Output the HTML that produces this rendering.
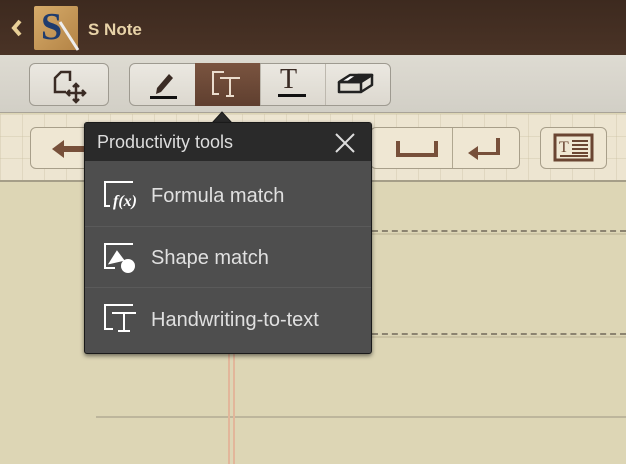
<!DOCTYPE html>
<html><head><style>
*{margin:0;padding:0;box-sizing:border-box}
body{width:626px;height:464px;overflow:hidden;position:relative;font-family:"Liberation Sans",sans-serif;background:#ddd6b5}
.a{position:absolute}
.top{left:0;top:0;width:626px;height:55px;background:linear-gradient(#3d2a1f,#4a3326);}
.tb{left:0;top:55px;width:626px;height:58px;background:linear-gradient(#dedbd2,#d2cfc6);border-bottom:1px solid #a9a398}
.kb{left:0;top:114px;width:626px;height:68px;background-color:#ede5d1;background-image:linear-gradient(90deg,rgba(200,190,160,.35) 1px,transparent 1px),linear-gradient(rgba(200,190,160,.35) 1px,transparent 1px);background-size:22px 22px;border-bottom:2px solid #a59e88}
.btn{border:1px solid #9e9a90;border-radius:6px;background:linear-gradient(#ebe8e1,#dcd8cf)}
.kbtn{border:1px solid #a89f8a;border-radius:6px;background:#efe7d3}
.pop{left:84px;top:122px;width:288px;height:232px;background:#4e4e4e;border:1px solid #1a1a1a;border-radius:3px;box-shadow:0 2px 4px rgba(0,0,0,.5)}
.hd{left:0;top:0;width:286px;height:38px;background:#2a2a2a;color:#ddd;font-size:18px;padding:9px 0 0 12px}
.it{left:0;width:286px;color:#e0e0e0;font-size:20px;padding-left:66px;border-top:1px solid #5a5a5a}
.dash{height:0;border-top:2px dashed #8c8470}
</style></head><body>
<div class="a top"></div>
<svg class="a" style="left:10px;top:18px" width="14" height="20"><path d="M10 3L4 10l6 7" fill="none" stroke="#e8cf97" stroke-width="4"/></svg>
<div class="a" style="left:34px;top:6px;width:44px;height:44px;background:linear-gradient(135deg,#d6ab6a,#b48446);border-radius:2px"></div>
<div class="a" style="left:41px;top:5px;font-family:'Liberation Serif',serif;font-size:38px;font-weight:bold;color:#1f3c6e">S</div>
<svg class="a" style="left:58px;top:20px" width="24" height="32"><line x1="2" y1="2" x2="20" y2="30" stroke="#eee" stroke-width="3"/></svg>
<div class="a" style="left:88px;top:20px;color:#e8d3a8;font-size:17px;font-weight:bold">S Note</div>

<div class="a tb"></div>
<div class="a btn" style="left:29px;top:63px;width:80px;height:43px"></div>
<svg class="a" style="left:52px;top:70px" width="36" height="34" fill="none" stroke="#3a2b24" stroke-width="2.5"><path d="M14 22H3V8l6-6h9v9"/><path d="M24 14v18M15 23h18"/><path d="M21 17l3-3 3 3M21 29l3 3 3-3M18 20l-3 3 3 3M30 20l3 3-3 3"/></svg>
<div class="a btn" style="left:129px;top:63px;width:262px;height:43px"></div>
<div class="a" style="left:195px;top:63px;width:65px;height:43px;background:linear-gradient(#7a5440,#5f3f2f)"></div>
<div class="a" style="left:260px;top:64px;width:1px;height:41px;background:#bdb8ae"></div>
<div class="a" style="left:325px;top:64px;width:1px;height:41px;background:#bdb8ae"></div>
<svg class="a" style="left:145px;top:68px" width="40" height="34"><path d="M12 20l12-14 4 4-12 14-5 2z" fill="#3a2b24"/><rect x="5" y="28" width="27" height="3" fill="#111"/></svg>
<svg class="a" style="left:210px;top:70px" width="36" height="28" fill="none" stroke="#eadccd" stroke-width="2"><path d="M14 2H3v22h6"/><path d="M10 8h20M20 8v18M16 26h8"/></svg>
<div class="a" style="left:280px;top:64px;font-family:'Liberation Serif',serif;font-size:28px;color:#3a2b24">T</div>
<div class="a" style="left:278px;top:94px;width:28px;height:3px;background:#111"></div>
<svg class="a" style="left:336px;top:70px" width="40" height="30" fill="none" stroke="#222" stroke-width="2.5" stroke-linejoin="round"><path d="M3 12L14 5h22l-11 7z" fill="#fff"/><path d="M22 5h14l-11 7H12z" fill="#222"/><path d="M3 12v10h22V12M25 22l11-7V5"/><path d="M3 12h22"/></svg>

<div class="a kb"></div>
<div class="a kbtn" style="left:30px;top:127px;width:70px;height:42px"></div>
<svg class="a" style="left:50px;top:138px" width="40" height="22"><path d="M2 11l12-9v6h24v6H14v6z" fill="#77503a"/></svg>
<div class="a kbtn" style="left:370px;top:127px;width:150px;height:42px"></div>
<div class="a" style="left:452px;top:128px;width:1px;height:40px;background:#b0a790"></div>
<svg class="a" style="left:396px;top:139px" width="44" height="20"><path d="M2 2v14h38V2" fill="none" stroke="#77503a" stroke-width="4"/></svg>
<svg class="a" style="left:466px;top:136px" width="36" height="26"><path d="M30 2v14H12v-6L2 17l10 7v-5h22V2z" fill="#77503a"/></svg>
<div class="a kbtn" style="left:540px;top:127px;width:67px;height:42px"></div>
<svg class="a" style="left:553px;top:133px" width="42" height="30"><rect x="2" y="2" width="37" height="25" fill="none" stroke="#6a4532" stroke-width="3"/><text x="6" y="19" font-family="Liberation Serif" font-size="16" fill="#6a4532">T</text><path d="M19 8h16M19 12h16M19 16h16M19 20h16M7 23h28" stroke="#6a4532" stroke-width="2"/></svg>

<div class="a dash" style="left:372px;top:230px;width:254px"></div>
<div class="a" style="left:372px;top:233px;width:254px;height:2px;background:#cbc3a3"></div>
<div class="a dash" style="left:372px;top:333px;width:254px"></div>
<div class="a" style="left:372px;top:336px;width:254px;height:2px;background:#cbc3a3"></div>
<div class="a" style="left:96px;top:416px;width:530px;height:2px;background:#bdb69c"></div>
<div class="a" style="left:228px;top:353px;width:2px;height:111px;background:#e2b69a"></div>
<div class="a" style="left:233px;top:353px;width:2px;height:111px;background:#e2b69a"></div>

<svg class="a" style="left:212px;top:107px" width="20" height="16"><path d="M0 16L10 5 20 16z" fill="#2a2a2a" stroke="#1a1a1a"/></svg>
<div class="a pop">
 <div class="a hd">Productivity tools</div>
 <svg class="a" style="left:250px;top:10px" width="20" height="20" stroke="#ddd" stroke-width="2"><path d="M1 1l18 18M19 1L1 19"/></svg>
 <div class="a it" style="top:38px;height:65px;line-height:70px;border-top:none">Formula match</div>
 <div class="a it" style="top:103px;height:61px;line-height:63px">Shape match</div>
 <div class="a it" style="top:164px;height:67px;line-height:64px">Handwriting-to-text</div>
 <svg class="a" style="left:19px;top:58px" width="40" height="30" fill="none" stroke="#fff" stroke-width="2"><path d="M29 1H1v24h5"/><text x="9" y="25" font-family="Liberation Serif" font-style="italic" font-weight="bold" font-size="16" fill="#fff" stroke="none">f(x)</text></svg>
 <svg class="a" style="left:19px;top:120px" width="40" height="32" fill="none" stroke="#fff" stroke-width="2"><path d="M29 1H1v24h10"/><path d="M6 20l7-11 6 8z" fill="#fff"/><circle cx="24" cy="23" r="7" fill="#fff" stroke="none"/></svg>
 <svg class="a" style="left:19px;top:181px" width="40" height="32" fill="none" stroke="#fff" stroke-width="2"><path d="M29 1H1v24h8"/><path d="M8 9h24M20 9v18M14 27h12"/></svg>
</div>
</body></html>
